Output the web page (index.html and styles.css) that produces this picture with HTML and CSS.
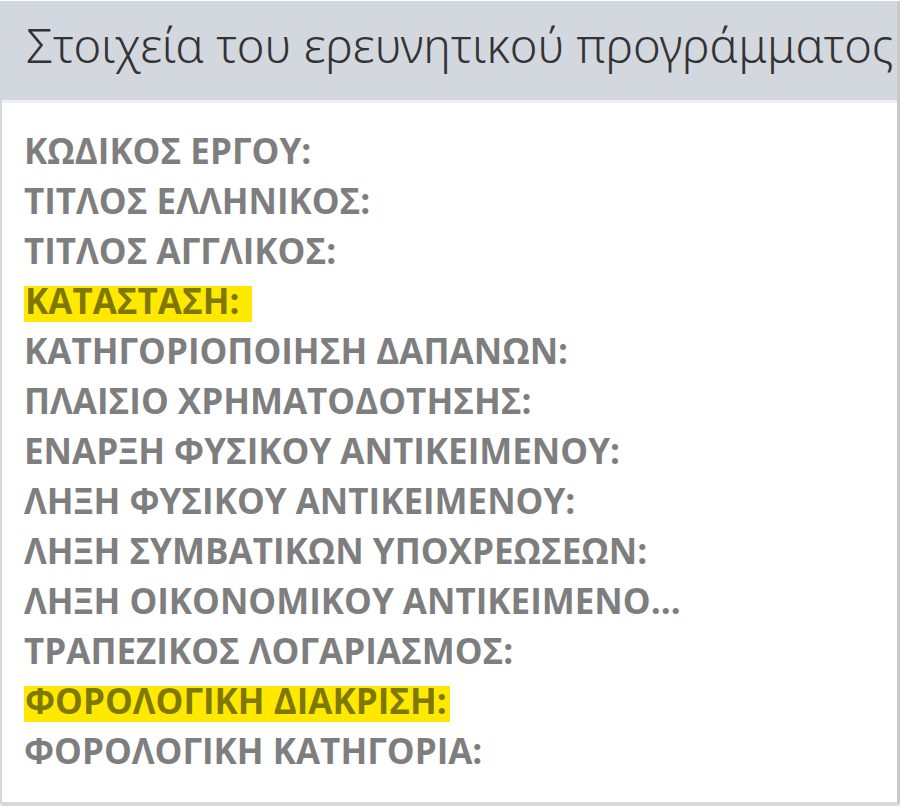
FILE: index.html
```html
<!DOCTYPE html>
<html lang="el">
<head>
  <meta charset="UTF-8" />
  <title>Στοιχεία του ερευνητικού προγράμματος</title>
  <link rel="stylesheet" href="styles.css">
</head>
<body>
  <div class="panel">
    <div class="panel-heading">Στοιχεία του ερευνητικού προγράμματος</div>
    <div class="panel-body">
      <div class="field">ΚΩΔΙΚΟΣ ΕΡΓΟΥ:</div>
      <div class="field">ΤΙΤΛΟΣ ΕΛΛΗΝΙΚΟΣ:</div>
      <div class="field">ΤΙΤΛΟΣ ΑΓΓΛΙΚΟΣ:</div>
      <div class="field"><span class="mark">ΚΑΤΑΣΤΑΣΗ:&nbsp;</span></div>
      <div class="field">ΚΑΤΗΓΟΡΙΟΠΟΙΗΣΗ ΔΑΠΑΝΩΝ:</div>
      <div class="field">ΠΛΑΙΣΙΟ ΧΡΗΜΑΤΟΔΟΤΗΣΗΣ:</div>
      <div class="field">ΕΝΑΡΞΗ ΦΥΣΙΚΟΥ ΑΝΤΙΚΕΙΜΕΝΟΥ:</div>
      <div class="field">ΛΗΞΗ ΦΥΣΙΚΟΥ ΑΝΤΙΚΕΙΜΕΝΟΥ:</div>
      <div class="field">ΛΗΞΗ ΣΥΜΒΑΤΙΚΩΝ ΥΠΟΧΡΕΩΣΕΩΝ:</div>
      <div class="field">ΛΗΞΗ ΟΙΚΟΝΟΜΙΚΟΥ ΑΝΤΙΚΕΙΜΕΝΟΥ:</div>
      <div class="field">ΤΡΑΠΕΖΙΚΟΣ ΛΟΓΑΡΙΑΣΜΟΣ:</div>
      <div class="field"><span class="mark">ΦΟΡΟΛΟΓΙΚΗ ΔΙΑΚΡΙΣΗ:</span></div>
      <div class="field">ΦΟΡΟΛΟΓΙΚΗ ΚΑΤΗΓΟΡΙΑ:</div>
    </div>
  </div>
</body>
</html>
```

FILE: styles.css
```css
html, body {
  margin: 0;
  padding: 0;
  background: white;
  font-family: "Open Sans", "Noto Sans", sans-serif;
}

.panel {
  width: 900px;
  box-sizing: border-box;
  margin-top: 1px;
  border-left: 2px solid #d3d7de;
  border-right: 3px solid #c8c9cb;
  border-bottom: 4px solid #d5d9e0;
  border-radius: 0 0 3px 3px;
}

.panel-heading {
  height: 102px;
  box-sizing: border-box;
  background: #d3d7de;
  color: #333;
  font-family: "Noto Sans", "Open Sans", sans-serif;
  font-weight: 300;
  font-size: 47px;
  padding: 12px 0 0 24px;
  white-space: nowrap;
  overflow: hidden;
  border-bottom: 3px solid #eef0f3;
}

.panel-body {
  height: 699px;
  box-sizing: border-box;
  padding: 23px 0 0 22px;
}

.field {
  width: 658px;
  height: 50px;
  line-height: 50px;
  font-size: 35px;
  font-weight: 700;
  color: #7e7e7e;
  white-space: nowrap;
  overflow: hidden;
  text-overflow: ellipsis;
}

/* highlighted label: box sits a little low under the caps */
.mark {
  display: inline-block;
  line-height: 29px;
  padding: 0 3px 7px;
  margin-left: -2px;
  background: #ffe900;
  color: #7f7800;
}
```
